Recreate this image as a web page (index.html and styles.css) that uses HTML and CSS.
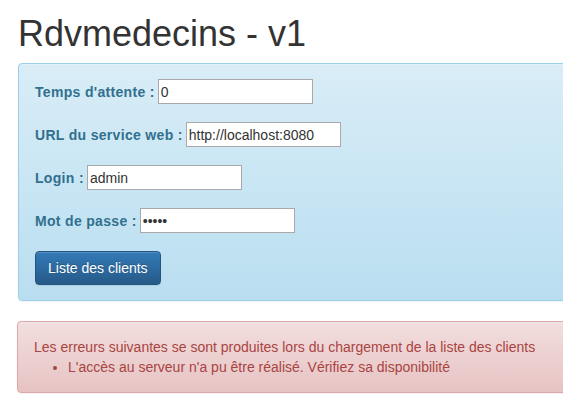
FILE: index.html
```html
<!DOCTYPE html>
<html lang="fr">
<head>
    <meta charset="UTF-8">
    <meta name="viewport" content="width=device-width, initial-scale=1.0">
    <title>Rdvmedecins - v1</title>
    <link rel="stylesheet" href="styles.css">
</head>
<body>
    <div class="container">
        <h1>Rdvmedecins - v1</h1>
        <div class="alert alert-info">
            <div class="form-row">
                <label for="delay">Temps d'attente :</label>
                <input type="text" id="delay" value="0">
            </div>
            <div class="form-row">
                <label for="url">URL du service web :</label>
                <input type="text" id="url" value="http://localhost:8080">
            </div>
            <div class="form-row">
                <label for="login">Login :</label>
                <input type="text" id="login" value="admin">
            </div>
            <div class="form-row">
                <label for="password">Mot de passe :</label>
                <input type="password" id="password" value="admin">
            </div>
            <button class="btn btn-primary">Liste des clients</button>
        </div>
        <div class="alert alert-danger">
            Les erreurs suivantes se sont produites lors du chargement de la liste des clients
            <ul>
                <li>L'accès au serveur n'a pu être réalisé. Vérifiez sa disponibilité</li>
            </ul>
        </div>
    </div>
</body>
</html>
```
FILE: styles.css
```css
html, body {
    overflow: hidden;
}
body {
    margin: 0;
    font-family: "Liberation Sans", Arial, sans-serif;
    font-size: 14px;
    line-height: 20px;
    color: #333;
    background-color: #fff;
}
.container {
    width: 760px;
    padding-left: 18px;
}
h1 {
    font-size: 36px;
    font-weight: 500;
    line-height: 40px;
    margin: 14px 0 9px 0;
}
.alert {
    padding: 15px 16px;
    border: 1px solid transparent;
    border-radius: 4px;
    margin-bottom: 20px;
    box-shadow: inset 0 1px 0 rgba(255, 255, 255, 0.25), 0 1px 2px rgba(0, 0, 0, 0.05);
}
.alert-info {
    color: #31708f;
    background-image: linear-gradient(to bottom, #d9edf7 0, #b9def0 100%);
    border-color: #9acfea;
}
.alert-danger {
    color: #a94442;
    background-image: linear-gradient(to bottom, #f2dede 0, #e7c3c3 100%);
    border-color: #dca7a7;
    margin-left: -1px;
}
.form-row {
    display: flex;
    align-items: center;
    margin-bottom: 18px;
}
label {
    font-weight: bold;
    letter-spacing: 0.32px;
    margin-right: 3px;
}
input {
    width: 155px;
    height: 25px;
    box-sizing: border-box;
    border: 1px solid #a9a9a9;
    padding: 1px 2px;
    font-family: "Liberation Sans", Arial, sans-serif;
    font-size: 14px;
    color: #333;
    background: #fff;
    margin: 0;
}
.btn {
    display: block;
    padding: 6px 12px;
    font-family: "Liberation Sans", Arial, sans-serif;
    font-size: 14px;
    line-height: 20px;
    border: 1px solid transparent;
    border-radius: 4px;
    text-shadow: 0 -1px 0 rgba(0, 0, 0, 0.2);
    box-shadow: inset 0 1px 0 rgba(255, 255, 255, 0.15), 0 1px 1px rgba(0, 0, 0, 0.075);
}
.btn-primary {
    color: #fff;
    background-image: linear-gradient(to bottom, #337ab7 0, #265a88 100%);
    border-color: #245580;
}
ul {
    margin: 0;
    padding-left: 34px;
}
```
